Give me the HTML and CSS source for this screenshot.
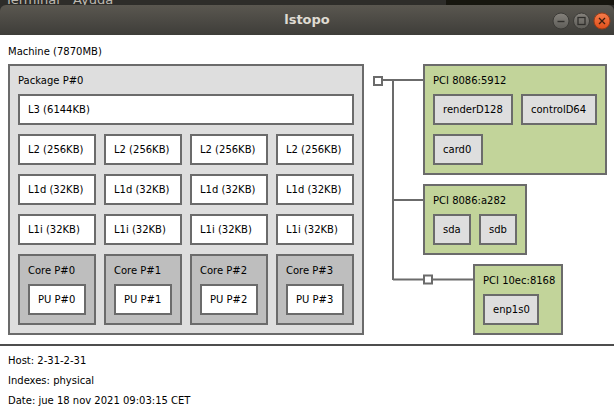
FILE: index.html
```html
<!DOCTYPE html>
<html>
<head>
<meta charset="utf-8">
<link rel="stylesheet" href="styles.css">
</head>
<body>
<div class="desk">
  <div class="menus"><span>Terminal</span><span>Ayuda</span></div>
  <div class="desk-dark"></div>
</div>
<div class="titlebar">
  <div></div>
  <div class="title">lstopo</div>
  <div class="buttons">
    <svg width="60" height="18" viewBox="0 0 60 18">
      <defs>
        <linearGradient id="g" x1="0" y1="0" x2="0" y2="1">
          <stop offset="0" stop-color="#85827c"/>
          <stop offset="1" stop-color="#5d5c57"/>
        </linearGradient>
        <linearGradient id="o" x1="0" y1="0" x2="0" y2="1">
          <stop offset="0" stop-color="#f57d4c"/>
          <stop offset="1" stop-color="#e04e19"/>
        </linearGradient>
      </defs>
      <circle cx="10" cy="9" r="8" fill="url(#g)" stroke="#3b3a36" stroke-width="1"/>
      <path d="M6.5 9.5 H13.5" stroke="#302f2c" stroke-width="1.4"/>
      <circle cx="30.5" cy="9" r="8" fill="url(#g)" stroke="#3b3a36" stroke-width="1"/>
      <rect x="27" y="5.5" width="7" height="7" fill="none" stroke="#302f2c" stroke-width="1.3"/>
      <circle cx="51" cy="9" r="8" fill="url(#o)" stroke="#9c3d17" stroke-width="1"/>
      <path d="M48 6 L54 12 M54 6 L48 12" stroke="#3a1e10" stroke-width="1.3"/>
    </svg>
  </div>
</div>
<main class="content">
  <div class="machine">
    <div class="mlabel">Machine (7870MB)</div>
    <div class="diagram">
      <div class="box package">
        <div class="label">Package P#0</div>
        <div class="stack">
          <div class="leaf">L3 (6144KB)</div>
          <div class="row4">
            <div class="leaf">L2 (256KB)</div>
            <div class="leaf">L2 (256KB)</div>
            <div class="leaf">L2 (256KB)</div>
            <div class="leaf">L2 (256KB)</div>
          </div>
          <div class="row4">
            <div class="leaf">L1d (32KB)</div>
            <div class="leaf">L1d (32KB)</div>
            <div class="leaf">L1d (32KB)</div>
            <div class="leaf">L1d (32KB)</div>
          </div>
          <div class="row4">
            <div class="leaf">L1i (32KB)</div>
            <div class="leaf">L1i (32KB)</div>
            <div class="leaf">L1i (32KB)</div>
            <div class="leaf">L1i (32KB)</div>
          </div>
          <div class="row4">
            <div class="box core"><div class="label">Core P#0</div><div class="leaf pu">PU P#0</div></div>
            <div class="box core"><div class="label">Core P#1</div><div class="leaf pu">PU P#1</div></div>
            <div class="box core"><div class="label">Core P#2</div><div class="leaf pu">PU P#2</div></div>
            <div class="box core"><div class="label">Core P#3</div><div class="leaf pu">PU P#3</div></div>
          </div>
        </div>
      </div>
      <div class="io">
        <svg class="wires" width="250" height="271" viewBox="0 0 250 271">
          <g stroke="#6b6b6b" stroke-width="2" fill="none">
            <path d="M19 16 H59"/>
            <path d="M29 16 V216"/>
            <path d="M29 136 H59"/>
            <path d="M29 215.5 H60"/>
            <path d="M68 215.5 H109"/>
            <rect x="10" y="13" width="8" height="8" fill="#fff"/>
            <rect x="60" y="211.5" width="8" height="8" fill="#fff"/>
          </g>
        </svg>
        <div class="box pci pci1">
          <div class="label">PCI 8086:5912</div>
          <div class="rows">
            <div class="row">
              <div class="leaf osdev w80">renderD128</div>
              <div class="leaf osdev w76">controlD64</div>
            </div>
            <div class="row">
              <div class="leaf osdev w50">card0</div>
            </div>
          </div>
        </div>
        <div class="box pci pci2">
          <div class="label">PCI 8086:a282</div>
          <div class="row">
            <div class="leaf osdev w39">sda</div>
            <div class="leaf osdev w39">sdb</div>
          </div>
        </div>
        <div class="box pci pci3">
          <div class="label">PCI 10ec:8168</div>
          <div class="row">
            <div class="leaf osdev w56">enp1s0</div>
          </div>
        </div>
      </div>
    </div>
  </div>
  <div class="legend">
    <div>Host: 2-31-2-31</div>
    <div>Indexes: physical</div>
    <div>Date: jue 18 nov 2021 09:03:15 CET</div>
  </div>
</main>
</body>
</html>
```
FILE: styles.css
```css
* { box-sizing: border-box; margin: 0; padding: 0; }
html, body { width: 614px; height: 411px; overflow: hidden; }
body {
  background: #2e2d2a;
  font-family: "DejaVu Sans", sans-serif;
  color: #000;
}
.desk { height: 5px; display: flex; overflow: hidden; }
.menus {
  flex: 0 0 446px;
  display: flex;
  gap: 13px;
  padding-left: 5px;
  margin-top: -7px;
  height: 13px;
  font-size: 13px;
  line-height: 13px;
  color: #bdb9b1;
}
.desk-dark { flex: 1; background: #17160f; }

.titlebar {
  height: 30px;
  border-radius: 6px 6px 0 0;
  background: linear-gradient(#5a5750, #3e3d39);
  display: grid;
  grid-template-columns: 1fr auto 1fr;
  align-items: center;
}
.title {
  font-weight: bold;
  font-size: 13px;
  line-height: 30px;
  color: #dfdbd2;
}
.buttons {
  justify-self: end;
  padding-right: 3px;
  margin-top: 2px;
  display: flex;
}

.content { background: #fff; height: 376px; }
.machine { padding: 7px 0 0 8px; }
.mlabel { font-size: 10px; line-height: 20px; height: 20px; }
.diagram { margin-top: 2px; display: flex; align-items: flex-start; }

.box { border: 2px solid #6b6b6b; padding: 0 8px 8px; }
.label {
  padding-top: 2px;
  line-height: 26px;
  height: 28px;
  font-size: 10px;
  white-space: nowrap;
}
.package { width: 356px; height: 271px; background: #dedede; }
.stack { display: flex; flex-direction: column; gap: 9px; }
.row4 { display: grid; grid-template-columns: repeat(4, 78px); gap: 8px; }
.leaf {
  height: 31px;
  border: 2px solid #6b6b6b;
  background: #fff;
  padding-left: 8px;
  line-height: 27px;
  font-size: 10px;
  white-space: nowrap;
}
.core { background: #bebebe; height: 71px; }
.pu { width: 58px; }

.io {
  position: relative;
  width: 250px;
  height: 271px;
  padding-left: 59px;
  display: flex;
  flex-direction: column;
  align-items: flex-start;
  gap: 9px;
}
.wires { position: absolute; left: 0; top: 0; }
.pci { background: #c2d49a; position: relative; }
.pci1 { width: 184px; height: 111px; }
.pci2 { width: 104px; height: 71px; }
.pci3 { width: 90px; height: 71px; margin-left: 50px; }
.rows { display: flex; flex-direction: column; gap: 9px; }
.row { display: flex; gap: 8px; }
.osdev { background: #dedede; }
.w80 { width: 80px; }
.w76 { width: 76px; }
.w50 { width: 50px; }
.w39 { width: 39px; }
.w56 { width: 56px; }

.legend {
  margin-top: 9px;
  border-top: 2px solid #4d4d4d;
  padding: 5px 0 0 8px;
}
.legend div { font-size: 10px; line-height: 20px; height: 20px; }
```
